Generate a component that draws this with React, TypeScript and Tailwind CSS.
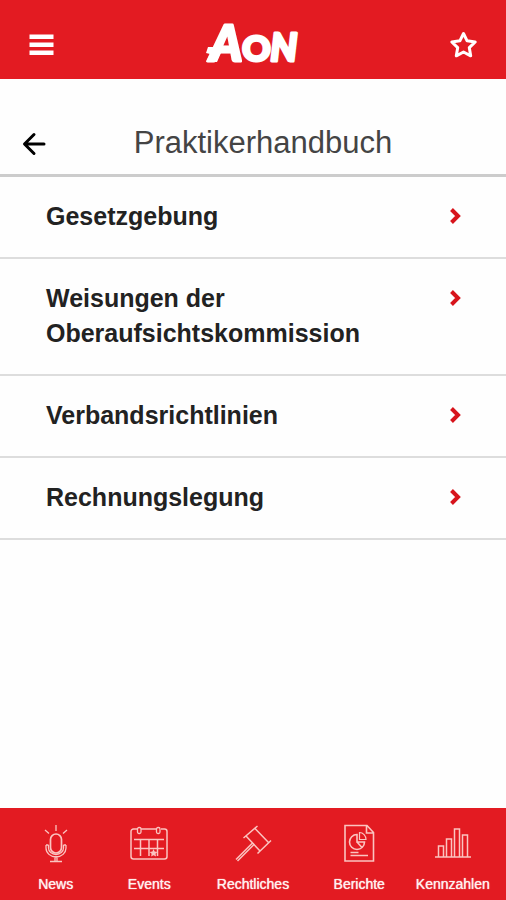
import React from "react";

const chapters = [
  "Gesetzgebung",
  "Weisungen der Oberaufsichtskommission",
  "Verbandsrichtlinien",
  "Rechnungslegung",
];

const tabs = [
  { label: "News", icon: <MicIcon />, width: "w-[22%]" },
  { label: "Events", icon: <CalendarIcon />, width: "w-[15%]" },
  { label: "Rechtliches", icon: <GavelIcon />, width: "w-[26%]" },
  { label: "Berichte", icon: <ReportIcon />, width: "w-[16%]" },
  { label: "Kennzahlen", icon: <ChartIcon />, width: "w-[21%]" },
];

function AonLogo() {
  return (
    <svg
      viewBox="0 0 100 71"
      className="h-[71px] w-[100px] fill-white stroke-white font-['Lato',sans-serif] font-black"
      strokeLinejoin="round"
      role="img"
      aria-label="Aon"
    >
      <text x="9" y="53" strokeWidth="3">
        <tspan fontSize="49" fontStyle="italic">A</tspan>
        <tspan fontSize="35">O</tspan>
        <tspan fontSize="37" fontStyle="italic">N</tspan>
      </text>
      <path d="M7 39L34 39L34 45L20 45L16 54L5 54L9 46L5 45Z" stroke="none" />
    </svg>
  );
}

function MicIcon() {
  return (
    <svg viewBox="0 0 40 40" className="h-10 w-10 fill-none stroke-[#fbc4c0]">
      <rect x="14.500" y="10" width="11" height="19" rx="5.500" strokeWidth="1.700" />
      <path
        d="M20 1v6M9 6l4 3.500M31 6l-4 3.500M10 21v3a10 9 0 0 0 20 0v-3M12.500 21v3a7.500 6.500 0 0 0 15 0v-3M10 21h2.500M27.500 21h2.500M19 32v5M21 32v5M14 37.500h12"
        strokeWidth="1.300"
      />
    </svg>
  );
}

function CalendarIcon() {
  return (
    <svg viewBox="0 0 40 40" className="h-10 w-10 fill-none stroke-[#fbc4c0]">
      <path
        d="M8 5H4.500a2.500 2.500 0 0 0-2.500 2.500v25A2.500 2.500 0 0 0 4.500 35h31a2.500 2.500 0 0 0 2.500-2.500v-25A2.500 2.500 0 0 0 35.500 5H32M12 5h15M5 15.500h30M5 24.500h30M11.500 15v17M20 15v17M28.500 15v17"
        strokeWidth="1.500"
      />
      <rect x="8.500" y="3.500" width="3.500" height="6" rx="1.500" strokeWidth="1.300" />
      <rect x="27.500" y="3.500" width="3.500" height="6" rx="1.500" strokeWidth="1.300" />
      <path
        d="M24.500 25l1.200 2.600 2.800.3-2 1.900.6 2.800-2.600-1.400-2.400 1.400.5-2.800-2-1.900 2.800-.3z"
        className="fill-[#fbc4c0]"
        stroke="none"
      />
    </svg>
  );
}

function GavelIcon() {
  return (
    <svg viewBox="0 0 40 40" className="h-10 w-10 fill-none stroke-[#fbc4c0]" strokeWidth="1.500">
      <path d="M24.500 2L10.500 14M38 16.500L24.500 29.500M22 4.500L35.500 18.500M13 12L27 27M20 18.500L3 35.500M21.500 20L4.500 37" />
    </svg>
  );
}

function ReportIcon() {
  return (
    <svg viewBox="0 0 40 40" className="h-10 w-10 fill-none stroke-[#fbc4c0]" strokeWidth="1.600">
      <path d="M6 1.500h22l6.500 7v28.500H6zM27.500 1.500v7.500h7" />
      <path d="M18 10.500a7.500 7.500 0 1 0 7.500 7.500H18zM18 18l5 5.500" />
      <path d="M20.500 8.500v7h6.500a6.500 7 0 0 0-6.500-7z" strokeWidth="1.200" />
      <path d="M11.500 28.500h8M11.500 31.500h17.500" />
    </svg>
  );
}

function ChartIcon() {
  return (
    <svg viewBox="0 0 40 40" className="h-10 w-10 fill-none stroke-[#fbc4c0]" strokeWidth="1.500">
      <path d="M2 33h36M5.500 33V22h5v11M13.500 33V15h5v18M21.500 33V5h5v28M29.500 33V11h5v22" />
    </svg>
  );
}

export default function App() {
  return (
    <div className="flex min-h-screen flex-col bg-[#fefefe] font-['Liberation_Sans',Arial,sans-serif] text-[#222]">
      <header className="flex h-[79px] items-center justify-between bg-[#e31b22] px-7 pt-2">
        <button type="button" aria-label="Menü">
          <svg viewBox="0 0 26 26" className="h-[26px] w-[26px] fill-white">
            <path d="M1.500 3.500h24v4.500h-24zM1.500 11.500h24v4.500h-24zM1.500 19.500h24v4.500h-24z" />
          </svg>
        </button>
        <AonLogo />
        <button type="button" aria-label="Favorit">
          <svg
            viewBox="0 0 30 30"
            className="h-[30px] w-[30px] fill-none stroke-white"
            strokeWidth="3"
            strokeLinejoin="round"
          >
            <path d="M15.500 4.500l3.600 7.300 8.100 1.200-5.900 5.700 1.400 8.100-7.200-3.800-7.200 3.800 1.400-8.100-5.900-5.700 8.100-1.200z" />
          </svg>
        </button>
      </header>

      <main className="grow">
        <div className="flex items-center border-b-3 border-[#ccc] px-5 pt-11 pb-[11px]">
          <button type="button" aria-label="Zurück">
            <svg
              viewBox="0 0 28 28"
              className="h-7 w-7 fill-none stroke-black"
              strokeWidth="3"
              strokeLinecap="round"
              strokeLinejoin="round"
            >
              <path d="M24 15H5M14 5.500L4.500 15L14 24.500" />
            </svg>
          </button>
          <h1 className="grow pr-2 text-center text-[31px] leading-10 text-[#444]">
            Praktikerhandbuch
          </h1>
        </div>
        <ul>
          {chapters.map((chapter) => (
            <li key={chapter} className="border-b-2 border-[#ddd]">
              <a
                href="#"
                className="flex items-start justify-between pt-[22px] pr-10 pb-[23px] pl-[46px] text-[25px] leading-[35px] font-bold"
              >
                <span className="max-w-[340px]">{chapter}</span>
                <svg
                  viewBox="0 0 20 35"
                  className="h-[35px] w-5 shrink-0 fill-none stroke-[#d7141c]"
                  strokeWidth="4"
                >
                  <path d="M5.500 10.500L12 17L5.500 23.500" />
                </svg>
              </a>
            </li>
          ))}
        </ul>
      </main>

      <nav className="flex h-[92px] bg-[#e31b22] pt-4">
        {tabs.map((tab) => (
          <a
            key={tab.label}
            href="#"
            className={`${tab.width} flex flex-col items-center gap-3 text-sm leading-4 text-[#fff0ee] [text-shadow:0_0_1px_#ffffff]`}
          >
            {tab.icon}
            {tab.label}
          </a>
        ))}
      </nav>
    </div>
  );
}
